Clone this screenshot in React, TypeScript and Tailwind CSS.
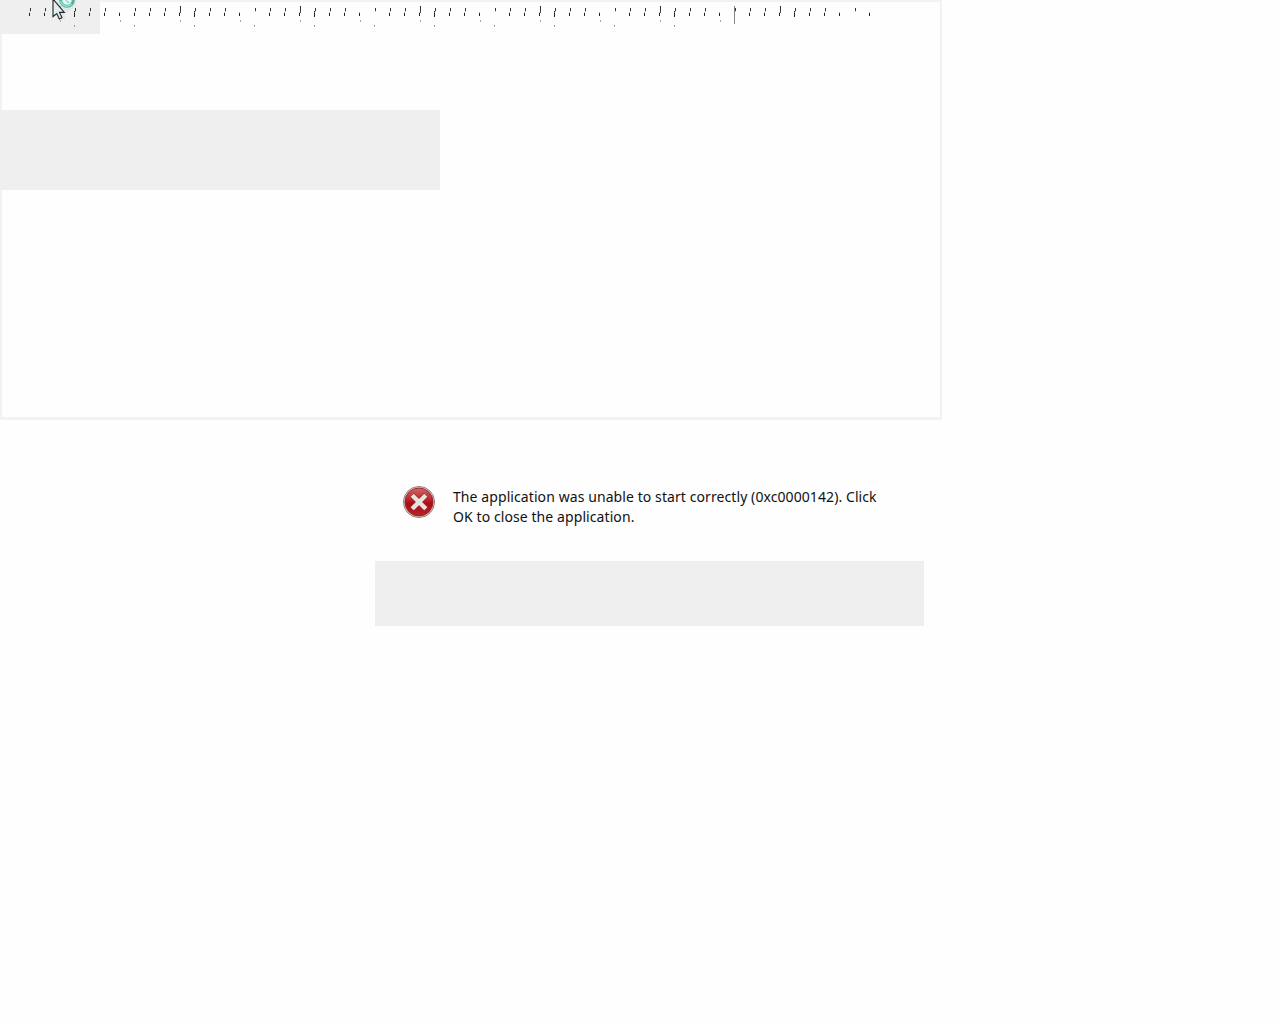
const KINDS = 'AABCAADFAABCAADEAABCAADEAABCAADEAABCAADEAABCAADEAABCAADED';

function Tick({ kind, index }: { kind: string; index: number }) {
  const x = 29 + index * 15;
  const dots = index <= 46;
  const upper = kind !== 'D';
  const lower = kind !== 'E';
  return (
    <g>
      {upper && (
        <rect x={x + 1} y={kind === 'B' ? 6 : 8} width="1" height={kind === 'B' ? 7 : 3} fill="#333" />
      )}
      {lower && (
        <rect x={x} y={kind === 'C' ? 11 : 13} width="1" height={kind === 'C' ? 6 : 3} fill="#222" />
      )}
      {upper && <rect x={x + 1} y="11" width="1" height="1" fill="#999" opacity=".5" />}
      {lower && <rect x={x} y="12" width="1" height="1" fill="#999" opacity=".6" />}
      {dots && (kind === 'B' || kind === 'D') && (
        <rect x={x + 1} y="20" width="1" height="2" fill="#a8a8a8" />
      )}
      {dots && (kind === 'C' || kind === 'E' || kind === 'F') && (
        <rect x={x} y="25" width="1" height="1.5" fill="#808080" />
      )}
    </g>
  );
}

function Ruler() {
  return (
    <svg className="absolute left-0 top-0" width="940" height="34" viewBox="0 0 940 34">
      {KINDS.split('').map((kind, i) => (
        <Tick key={i} kind={kind} index={i} />
      ))}
      <rect x="734" y="6" width="1" height="18" fill="#858585" />
    </svg>
  );
}

function BusyCursor() {
  return (
    <svg className="absolute left-[48px] top-0" width="34" height="24" viewBox="48 0 34 24">
      <path d="M57 3v14l3-2 3 5 3-1-2-5h2L76 5V0H57z" fill="#dcdede" opacity=".6" />
      <circle cx="67" cy="0" r="6.3" fill="#e6f4f1" stroke="#4db3a5" strokeWidth="3" />
      <path d="M60.6 1a6.5 6.5 0 0 0 11 3" fill="none" stroke="#98e2d3" strokeWidth="1.3" />
      <path d="M66 -1a3 3 0 0 0 3 3.4" fill="none" stroke="#64bdb1" strokeWidth="1" />
      <path
        d="M53 -1V16.5L56.8 13.5L59.3 19L62 17.7L59.5 12.4H64.3L53 -1Z"
        fill="#e0f0ee"
        stroke="#1c2424"
        strokeWidth="1.1"
      />
    </svg>
  );
}

function ErrorIcon() {
  return (
    <svg className="block shrink-0" width="34" height="34" viewBox="0 0 34 34">
      <defs>
        <linearGradient id="red" x1="0" y1="0" x2="0" y2="1">
          <stop offset="0" stopColor="#d0686a" />
          <stop offset=".4" stopColor="#bd2830" />
          <stop offset=".55" stopColor="#ab0c18" />
          <stop offset="1" stopColor="#b4262a" />
        </linearGradient>
      </defs>
      <circle cx="17" cy="17" r="15.6" fill="#d9c8c2" stroke="#8c6a66" strokeWidth=".8" />
      <circle cx="17" cy="17" r="14" fill="url(#red)" stroke="#8e1a20" strokeWidth=".8" />
      <path d="M10 10L24 24M24 10L10 24" stroke="#9a2028" strokeWidth="5.6" />
      <path d="M10.2 10.2L23.8 23.8M23.8 10.2L10.2 23.8" stroke="#e8e4dc" strokeWidth="4.4" />
    </svg>
  );
}

export default function App() {
  return (
    <div className="h-[1024px] w-[1280px] overflow-hidden bg-[#fefefe] font-['Noto_Sans',sans-serif] text-black">
      <div className="relative h-[420px] w-[942px] border-b-[3px] border-l-2 border-r-2 border-t-2 border-[#f2f2f2]">
        <div className="-ml-0.5 -mt-0.5 h-[34px] w-[100px] bg-[#efefef]" />
        <div className="-ml-0.5 mt-[76px] h-[80px] w-[440px] bg-[#efefef]" />
        <div className="absolute -left-0.5 -top-0.5">
          <Ruler />
          <BusyCursor />
        </div>
      </div>
      <div className="ml-[375px] flex h-[141px] w-[549px] items-start pl-[27px] pt-[65px]">
        <ErrorIcon />
        <div className="ml-[17px] mt-[2px] whitespace-nowrap text-[14px] leading-[20px] tracking-[0.085px] text-[#111]">
          <p>The application was unable to start correctly (0xc0000142). Click</p>
          <p>OK to close the application.</p>
        </div>
      </div>
      <div className="ml-[375px] h-[65px] w-[549px] bg-[#efefef]" />
    </div>
  );
}
